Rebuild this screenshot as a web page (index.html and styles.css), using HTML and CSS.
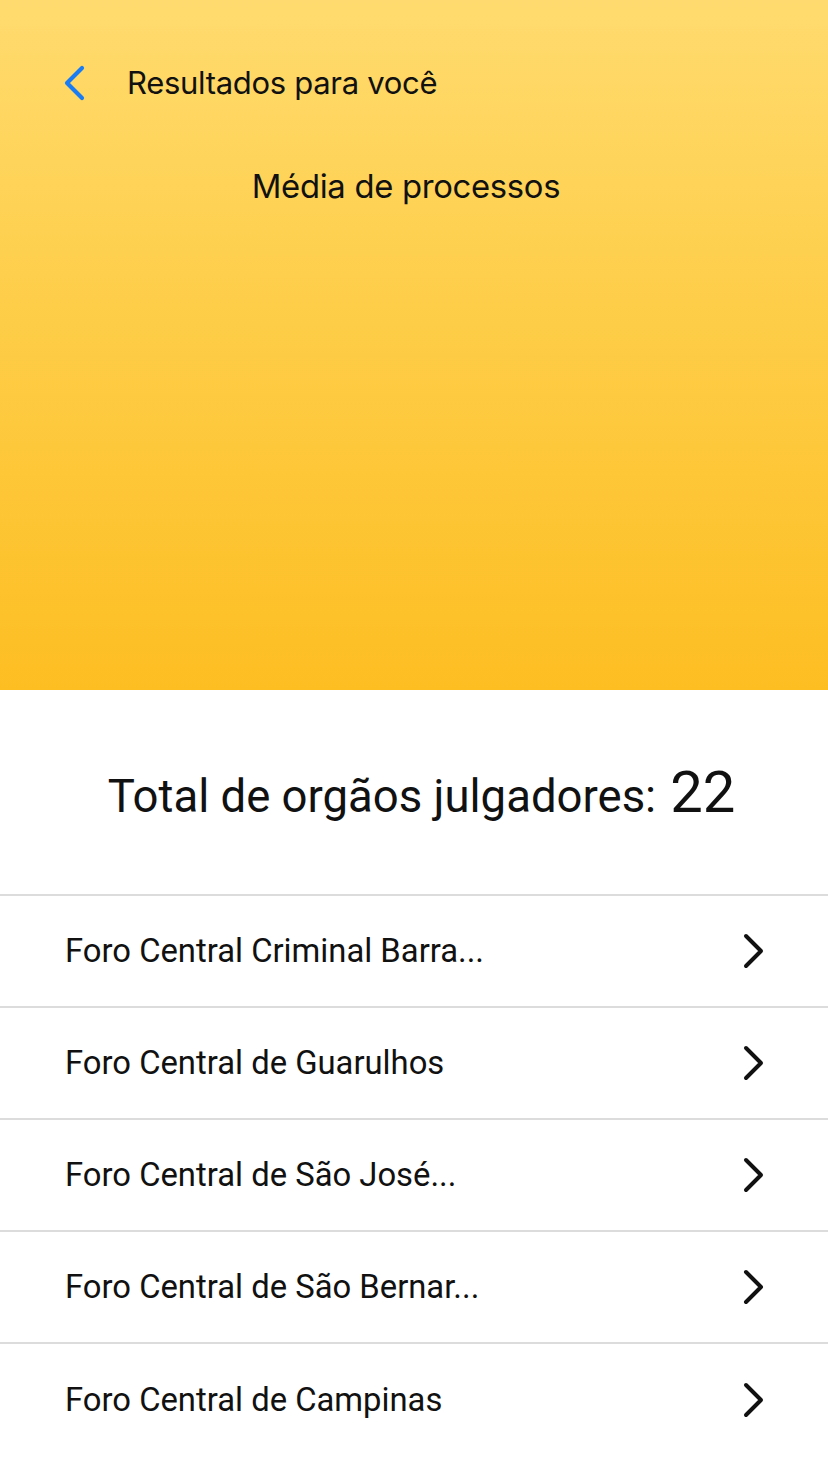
FILE: index.html
```html
<!DOCTYPE html>
<html lang="pt">
<head>
<meta charset="utf-8">
<link rel="stylesheet" href="styles.css">
</head>
<body>
<div class="page">
  <header class="hero">
    <div class="nav">
      <svg class="back" width="24" height="36" viewBox="0 0 24 36"><path d="M20 3 L5 18 L20 33" fill="none" stroke="#1a7cf5" stroke-width="4.2" stroke-linecap="round" stroke-linejoin="round"/></svg>
      <span class="nav-title">Resultados para você</span>
    </div>
    <h1 class="hero-title">Média de processos</h1>
  </header>
  <section class="total">
    <span class="total-label">Total de orgãos julgadores:</span>
    <span class="total-num">22</span>
  </section>
  <ul class="list">
    <li class="row"><span class="row-text">Foro Central Criminal Barra...</span><svg class="chev" width="24" height="36" viewBox="0 0 24 36"><path d="M4 3 L19 18 L4 33" fill="none" stroke="#111" stroke-width="4" stroke-linecap="round" stroke-linejoin="round"/></svg></li>
    <li class="row"><span class="row-text">Foro Central de Guarulhos</span><svg class="chev" width="24" height="36" viewBox="0 0 24 36"><path d="M4 3 L19 18 L4 33" fill="none" stroke="#111" stroke-width="4" stroke-linecap="round" stroke-linejoin="round"/></svg></li>
    <li class="row"><span class="row-text">Foro Central de São José...</span><svg class="chev" width="24" height="36" viewBox="0 0 24 36"><path d="M4 3 L19 18 L4 33" fill="none" stroke="#111" stroke-width="4" stroke-linecap="round" stroke-linejoin="round"/></svg></li>
    <li class="row"><span class="row-text">Foro Central de São Bernar...</span><svg class="chev" width="24" height="36" viewBox="0 0 24 36"><path d="M4 3 L19 18 L4 33" fill="none" stroke="#111" stroke-width="4" stroke-linecap="round" stroke-linejoin="round"/></svg></li>
    <li class="row"><span class="row-text">Foro Central de Campinas</span><svg class="chev" width="24" height="36" viewBox="0 0 24 36"><path d="M4 3 L19 18 L4 33" fill="none" stroke="#111" stroke-width="4" stroke-linecap="round" stroke-linejoin="round"/></svg></li>
  </ul>
</div>
</body>
</html>
```
FILE: styles.css
```css
* { box-sizing: border-box; }
html, body { margin: 0; padding: 0; background: #fff; }
body { font-family: Roboto, "Noto Sans", sans-serif; color: #111; }
.page { width: 828px; min-height: 1472px; overflow: hidden; }
.hero {
  height: 690px;
  background: linear-gradient(180deg, #ffdb6f 0%, #fecf4c 40%, #fdbe22 100%);
  padding-top: 65px;
}
.nav { display: flex; align-items: center; padding-left: 62px; height: 36px; }
.back { display: block; }
.nav-title { margin-left: 41px; font-family: Inter, Roboto, sans-serif; font-size: 31px; letter-spacing: -0.3px; line-height: 36px; }
.hero-title {
  margin: 66px 0 0; padding-right: 16px; text-align: center; font-weight: 400;
  font-family: Inter, Roboto, sans-serif; font-size: 32.8px; letter-spacing: -0.3px; line-height: 38px;
}
.total {
  height: 204px; display: flex; align-items: baseline; justify-content: center;
  padding: 72px 0 0 15px; gap: 14px;
}
.total-label { font-size: 45.5px; line-height: 60px; }
.total-num { font-size: 58px; line-height: 60px; }
.list { list-style: none; margin: 0; padding: 0; border-top: 2px solid #dcdcdc; }
.row {
  height: 112px; display: flex; align-items: center; justify-content: space-between;
  padding: 0 62px 0 65px; border-bottom: 2px solid #dcdcdc;
}
.row:last-child { border-bottom: none; }
.row-text { font-size: 32.8px; letter-spacing: 0; }
.chev { display: block; }
```
